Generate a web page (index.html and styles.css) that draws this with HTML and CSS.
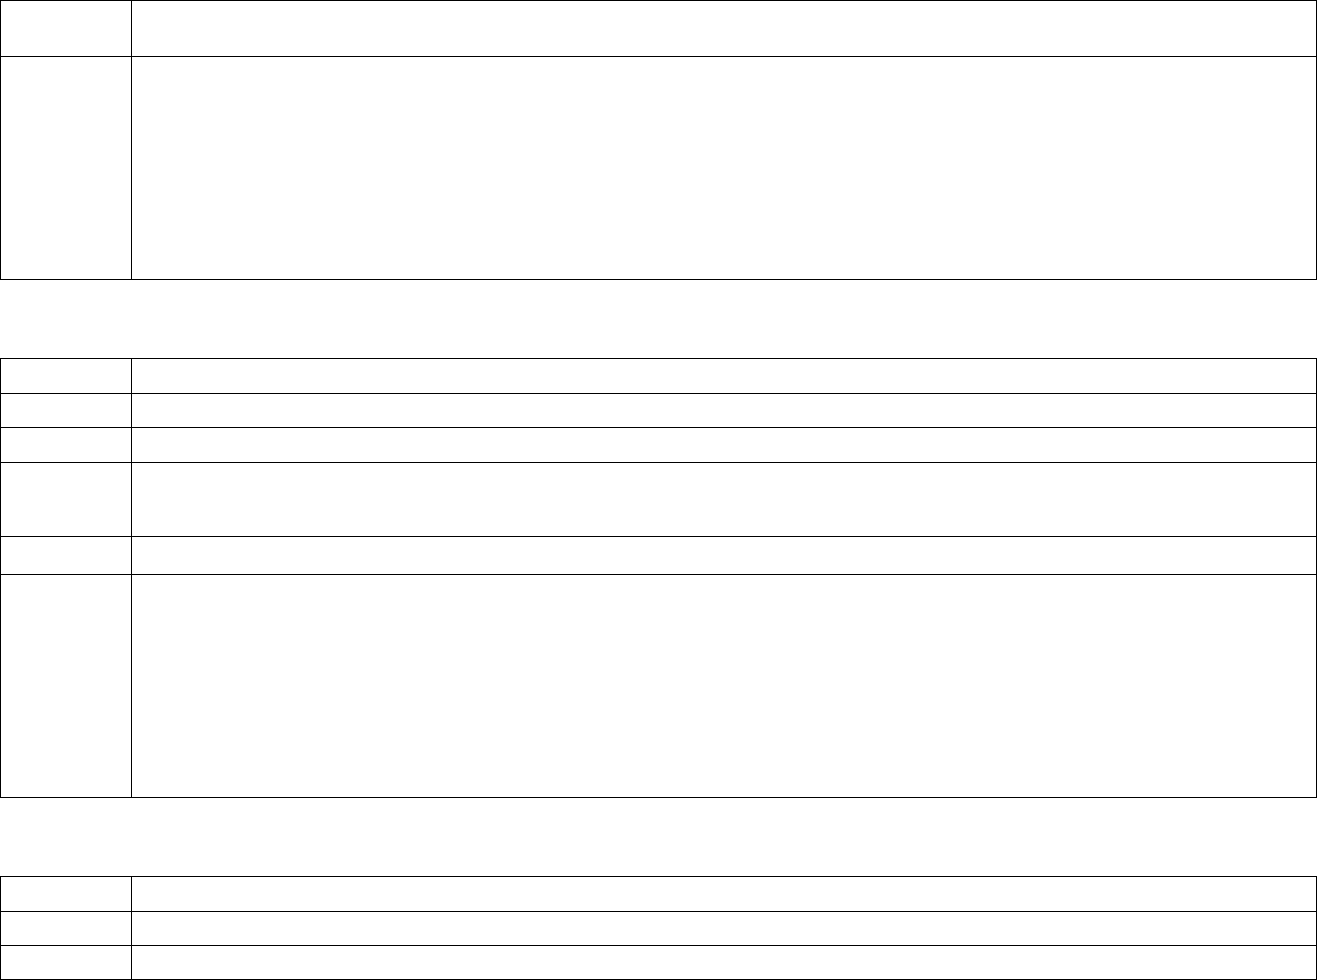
FILE: index.html
```html
<!DOCTYPE html>
<html>
<head>
<meta charset="utf-8">
<link rel="stylesheet" href="styles.css">
</head>
<body>
<table class="grid t1">
  <tr class="h56"><td class="label"></td><td></td></tr>
  <tr class="h223"><td class="label"></td><td></td></tr>
</table>
<div class="gap gap-a"></div>
<table class="grid t2">
  <tr class="h35"><td class="label"></td><td></td></tr>
  <tr class="h34"><td class="label"></td><td></td></tr>
  <tr class="h35"><td class="label"></td><td></td></tr>
  <tr class="h74"><td class="label"></td><td></td></tr>
  <tr class="h38"><td class="label"></td><td></td></tr>
  <tr class="h223"><td class="label"></td><td></td></tr>
</table>
<div class="gap gap-b"></div>
<table class="grid t3">
  <tr class="h35"><td class="label"></td><td></td></tr>
  <tr class="h34"><td class="label"></td><td></td></tr>
  <tr class="h34"><td class="label"></td><td></td></tr>
</table>
</body>
</html>
```

FILE: styles.css
```css
html, body {
  margin: 0;
  padding: 0;
  background: #ffffff;
  font-family: "Liberation Serif", serif;
}

.grid {
  width: 1317px;
  border-collapse: collapse;
  table-layout: fixed;
}

.grid td {
  border: 1px solid #000000;
  padding: 0;
}

.grid td.label {
  width: 130px;
}

.gap-a {
  height: 78px;
}

.gap-b {
  height: 78px;
}

.h34 { height: 34px; }
.h35 { height: 35px; }
.h38 { height: 38px; }
.h56 { height: 56px; }
.h74 { height: 74px; }
.h222 { height: 222px; }
.h223 { height: 223px; }
```
